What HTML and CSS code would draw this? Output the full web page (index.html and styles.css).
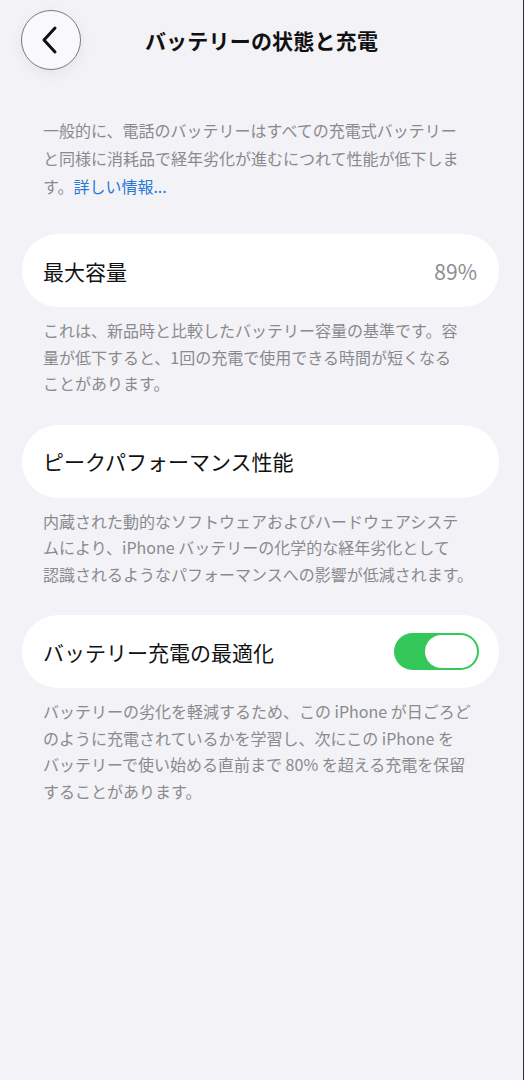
FILE: index.html
```html
<!DOCTYPE html>
<html lang="ja">
	<head>
		<meta charset="UTF-8">
		<title>バッテリーの状態と充電</title>
		<link rel="stylesheet" href="styles.css">
	</head>
	<body>
		<div class="page">
			<div class="nav">
				<button class="back">
					<svg width="20" height="30" viewBox="0 0 20 30">
						<path d="M15 3 L4 15 L15 27" fill="none" stroke="#111" stroke-width="3" stroke-linecap="round" stroke-linejoin="round"/>
					</svg>
				</button>
				<h1 class="title">バッテリーの状態と充電</h1>
				<span></span>
			</div>

			<p class="intro">一般的に、電話のバッテリーはすべての充電式バッテリー<br>と同様に消耗品で経年劣化が進むにつれて性能が低下しま<br>す。<a href="##">詳しい情報...</a></p>

			<div class="cell">
				<span class="label">最大容量</span>
				<span class="value">89%</span>
			</div>
			<p class="note">これは、新品時と比較したバッテリー容量の基準です。容<br>量が低下すると、1回の充電で使用できる時間が短くなる<br>ことがあります。</p>

			<div class="cell">
				<span class="label">ピークパフォーマンス性能</span>
			</div>
			<p class="note">内蔵された動的なソフトウェアおよびハードウェアシステ<br>ムにより、iPhone バッテリーの化学的な経年劣化として<br>認識されるようなパフォーマンスへの影響が低減されます。</p>

			<div class="cell">
				<span class="label">バッテリー充電の最適化</span>
				<div class="switch on"><span class="knob"></span></div>
			</div>
			<p class="note">バッテリーの劣化を軽減するため、この iPhone が日ごろど<br>のように充電されているかを学習し、次にこの iPhone を<br>バッテリーで使い始める直前まで 80% を超える充電を保留<br>することがあります。</p>
		</div>
	</body>
</html>
```

FILE: styles.css
```css
*{
	margin: 0;
	padding: 0;
	box-sizing: border-box;
}
body{
	background: #f2f2f7;
	font-family: "Noto Sans CJK JP", "Noto Sans", sans-serif;
	color: #111;
}
.page{
	min-height: 1080px;
	border-right: 1px solid #2c2c2e;
}
.nav{
	display: grid;
	grid-template-columns: 60px 1fr 60px;
	align-items: center;
	height: 80px;
	padding: 10px 21px;
}
.back{
	width: 60px;
	height: 60px;
	border-radius: 50%;
	border: 1px solid #7a7a7e;
	background: #f9f9fb;
	box-shadow: 0 4px 14px rgba(0,0,0,0.06);
	display: flex;
	align-items: center;
	justify-content: center;
}
.back svg{
	margin-left: -3px;
}
.title{
	text-align: center;
	font-size: 21px;
	font-weight: 700;
	letter-spacing: 0.2px;
}
.intro{
	margin: 36px 0 34px;
	padding: 0 20px 0 43px;
	font-size: 16px;
	line-height: 28px;
	color: #8a8a8e;
}
.intro a{
	color: #2a78d6;
	text-decoration: none;
}
.cell{
	display: flex;
	align-items: center;
	justify-content: space-between;
	height: 73px;
	margin: 0 24px 0 22px;
	padding: 0 22px 0 21px;
	background: #fff;
	border-radius: 36px;
}
.label{
	font-size: 21px;
	color: #111;
}
.value{
	font-size: 21px;
	color: #8e8e93;
}
.note{
	margin: 10px 0 28px;
	padding: 0 10px 0 43px;
	font-size: 16px;
	line-height: 26.5px;
	color: #8a8a8e;
	white-space: nowrap;
}
.switch{
	width: 85px;
	height: 37px;
	border-radius: 19px;
	background: #34c759;
	padding: 2px;
	display: flex;
	justify-content: flex-end;
	margin-right: -2px;
}
.knob{
	width: 52px;
	height: 33px;
	border-radius: 17px;
	background: #fff;
}
```
